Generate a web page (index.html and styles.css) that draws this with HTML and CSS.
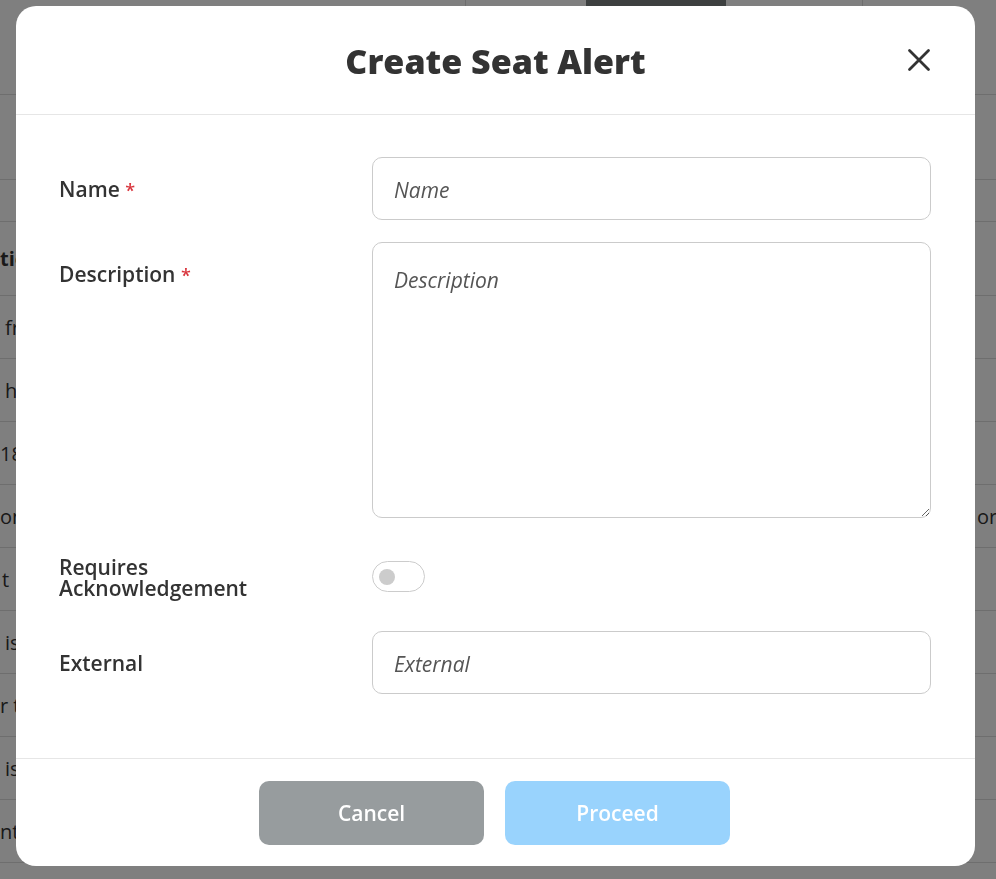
FILE: index.html
```html
<!DOCTYPE html>
<html lang="en">
<head>
<meta charset="utf-8">
<title>Create Seat Alert</title>
<link rel="stylesheet" href="styles.css">
</head>
<body>
<div class="page">
  <div class="tabs">
    <div class="tab tab-a"></div>
    <div class="tab tab-b"></div>
    <div class="tab tab-dark"></div>
    <div class="tab tab-c"></div>
    <div class="tab tab-d"></div>
  </div>
  <div class="bar bar-tall"></div>
  <div class="bar bar-short"></div>
  <div class="row row-head"><span class="cell-l">tion</span><span class="cell-r"></span></div>
  <div class="row"><span class="cell-l ind">from</span><span class="cell-r"></span></div>
  <div class="row"><span class="cell-l ind">has</span><span class="cell-r"></span></div>
  <div class="row"><span class="cell-l">18</span><span class="cell-r"></span></div>
  <div class="row"><span class="cell-l">on</span><span class="cell-r">or</span></div>
  <div class="row"><span class="cell-l ind2">t</span><span class="cell-r"></span></div>
  <div class="row"><span class="cell-l ind">is</span><span class="cell-r"></span></div>
  <div class="row"><span class="cell-l">r t</span><span class="cell-r"></span></div>
  <div class="row"><span class="cell-l ind">is</span><span class="cell-r"></span></div>
  <div class="row"><span class="cell-l">nt</span><span class="cell-r"></span></div>
  <div class="row row-last"><span class="cell-l"></span><span class="cell-r"></span></div>
</div>

<div class="overlay">
  <div class="modal">
    <div class="modal-header">
      <h1 class="modal-title">Create Seat Alert</h1>
      <button class="close" aria-label="Close">
        <svg width="24" height="24" viewBox="0 0 24 24"><path d="M2.5 2.5 L21.5 21.5 M21.5 2.5 L2.5 21.5" stroke="#333" stroke-width="2.8" stroke-linecap="round" fill="none"/></svg>
      </button>
    </div>
    <form class="modal-body">
      <label class="lbl">Name <span class="req">*</span></label>
      <input class="field" type="text" placeholder="Name">

      <label class="lbl">Description <span class="req">*</span></label>
      <textarea class="field area" placeholder="Description"></textarea>

      <label class="lbl lbl-multi">Requires Acknowledgement</label>
      <div class="toggle-wrap"><span class="toggle"><span class="knob"></span></span></div>

      <label class="lbl">External</label>
      <input class="field" type="text" placeholder="External">
    </form>
    <div class="modal-footer">
      <button class="btn btn-cancel">Cancel</button>
      <button class="btn btn-proceed">Proceed</button>
    </div>
  </div>
</div>
</body>
</html>
```

FILE: styles.css
```css
* { box-sizing: border-box; }
html, body { margin: 0; padding: 0; overflow: hidden; height: 879px; }
body {
  font-family: "Open Sans", "Liberation Sans", sans-serif;
  color: #333;
  background: #fff;
  width: 996px;
}

/* background page */
.page { display: flex; flex-direction: column; height: 879px; overflow: hidden; }
.tabs { display: flex; height: 95px; border-bottom: 1px solid #ddd; flex-shrink: 0; }
.tab { height: 100%; }
.tab-a { width: 466px; border-right: 1px solid #ddd; }
.tab-b { width: 120px; }
.tab-dark { width: 140px; background: #7a8080; }
.tab-c { width: 137px; border-right: 1px solid #ddd; }
.tab-d { flex: 1; }
.bar { border-bottom: 1px solid #ddd; flex-shrink: 0; }
.bar-tall { height: 85px; }
.bar-short { height: 42px; }
.row {
  display: flex;
  align-items: center;
  height: 63px;
  border-bottom: 1px solid #ddd;
  font-size: 20px;
  color: #333;
  flex-shrink: 0;
}
.row-head { height: 74px; font-weight: 700; }
.row-last { border-bottom: 0; }
.cell-l { width: 977px; white-space: nowrap; overflow: hidden; }
.cell-l.ind { padding-left: 5px; }
.cell-l.ind2 { padding-left: 2px; }
.cell-r { flex: 1; white-space: nowrap; overflow: hidden; }

/* overlay + modal */
.overlay {
  position: fixed;
  inset: 0;
  background: rgba(0, 0, 0, 0.5);
  display: flex;
  align-items: flex-start;
  padding: 6px 21px 0 16px;
}
.modal {
  width: 959px;
  height: 860px;
  background: #fff;
  border-radius: 20px;
  display: flex;
  flex-direction: column;
  overflow: hidden;
}
.modal-header {
  height: 109px;
  border-bottom: 1px solid #e6e6e6;
  display: flex;
  align-items: center;
  justify-content: center;
  position: relative;
  flex-shrink: 0;
}
.modal-title {
  margin: 0;
  font-size: 34px;
  font-weight: 800;
  color: #333;
  line-height: 1;
  padding-top: 2px;
}
.close {
  position: absolute;
  right: 44px;
  top: 42px;
  width: 24px;
  height: 24px;
  padding: 0;
  border: 0;
  background: none;
  display: flex;
}

.modal-body {
  display: grid;
  grid-template-columns: 313px 1fr;
  row-gap: 22px;
  padding: 42px 44px 64px 43px;
  align-items: start;
}
.lbl {
  font-size: 21px;
  font-weight: 600;
  color: #333;
  line-height: 21px;
  padding-top: 22px;
}
.lbl-multi { padding-top: 17px; min-height: 69px; max-width: 250px; }
.req { color: #d9363e; font-size: 18px; }
.field {
  font-family: "Open Sans", "Liberation Sans", sans-serif;
  font-size: 21px;
  color: #333;
  height: 63px;
  width: 100%;
  border: 1px solid #cbcbcb;
  border-radius: 10px;
  padding: 2px 21px 0;
  background: #fff;
  outline: none;
}
.field::placeholder { color: #555; font-style: italic; opacity: 1; }
.area {
  height: 276px;
  padding-top: 23px;
  resize: vertical;
  line-height: 29px;
}
.toggle-wrap { padding-top: 21px; }
.toggle {
  display: flex;
  align-items: center;
  width: 53px;
  height: 31px;
  border: 1px solid #ccc;
  border-radius: 16px;
  padding-left: 6px;
}
.knob {
  width: 16px;
  height: 16px;
  border-radius: 50%;
  background: #ccc;
}

.modal-footer {
  margin-top: auto;
  border-top: 1px solid #e6e6e6;
  height: 109px;
  display: flex;
  justify-content: center;
  gap: 21px;
  padding-top: 22px;
  padding-right: 2px;
}
.btn {
  width: 225px;
  height: 64px;
  border: 0;
  border-radius: 10px;
  color: #fff;
  font-family: "Open Sans", "Liberation Sans", sans-serif;
  font-size: 21px;
  font-weight: 600;
}
.btn-cancel { background: #979c9e; }
.btn-proceed { background: #99d3fd; }
```
